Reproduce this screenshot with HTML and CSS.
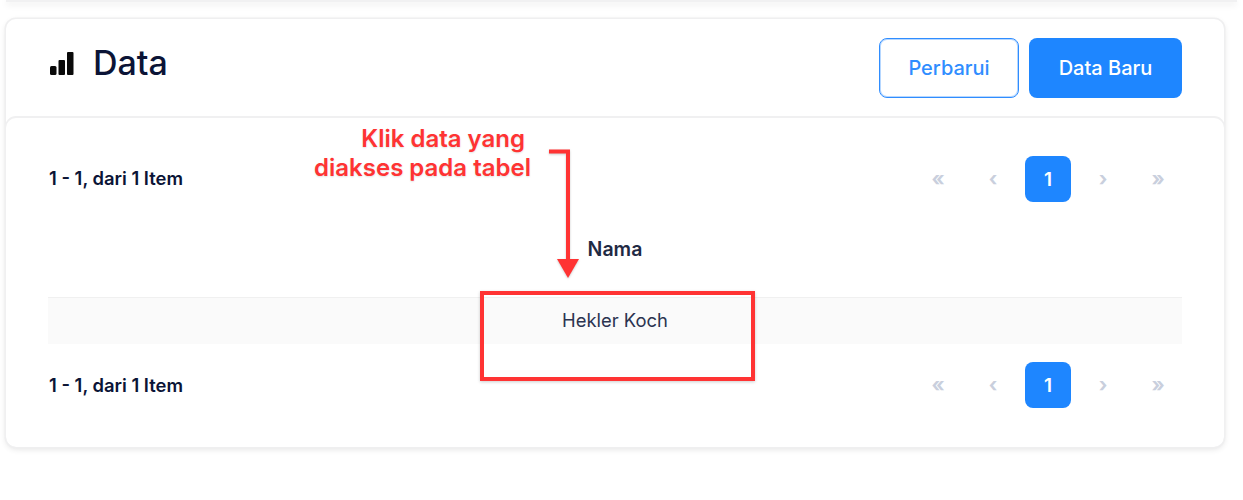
FILE: index.html
```html
<!DOCTYPE html>
<html lang="en">
<head>
    <meta charset="UTF-8">
    <meta name="viewport" content="width=device-width, initial-scale=1.0">
    <title>Data</title>

    <link rel="stylesheet" href="styles.css">
</head>
<body>
    <div class="top"></div>

    <div class="card">
        <div class="head">
            <h1 class="title">
                <svg class="title-icon" width="24" height="23" viewBox="0 0 24 23">
                    <rect x="0" y="14" width="6.500" height="9" rx="1.500"></rect>
                    <rect x="8.500" y="8" width="6.500" height="15" rx="1"></rect>
                    <rect x="17" y="0" width="6.500" height="23" rx="1"></rect>
                </svg>
                Data
            </h1>
            <div class="actions">
                <button class="btn btn-line">Perbarui</button>
                <button class="btn btn-main">Data Baru</button>
            </div>
        </div>

        <div class="body">
            <div class="bar">
                <span class="count">1 - 1, dari 1 Item</span>
                <div class="pager">
                    <span class="page">«</span>
                    <span class="page">‹</span>
                    <span class="page active">1</span>
                    <span class="page">›</span>
                    <span class="page">»</span>
                </div>
            </div>

            <div class="table">
                <div class="table-head">Nama</div>
                <div class="table-row">Hekler Koch</div>
            </div>

            <div class="bar bar-bottom">
                <span class="count">1 - 1, dari 1 Item</span>
                <div class="pager">
                    <span class="page">«</span>
                    <span class="page">‹</span>
                    <span class="page active">1</span>
                    <span class="page">›</span>
                    <span class="page">»</span>
                </div>
            </div>
        </div>

        <!-- penanda merah di atas tabel -->
        <div class="note"><span class="note-first">Klik data yang</span><br>diakses pada tabel</div>
        <svg class="arrow" width="50" height="140" viewBox="0 0 50 140">
            <path d="M1 3.500H20V112" fill="none" stroke="#ff3333" stroke-width="4"></path>
            <path d="M9 111H31L20 130Z" fill="#ff3333"></path>
        </svg>
        <div class="mark"></div>
    </div>
</body>
</html>
```

FILE: styles.css
```css
*{
    box-sizing: border-box;
}

html,
body{
    min-height: 500px;
}

body{
    margin: 0;
    padding-bottom: 53px;
    background-color: #fff;
    font-family: Inter, "Liberation Sans", sans-serif;
    color: #0b1436;
}

/* sisa kartu di atas */
.top{
    height: 2px;
    margin: 0 6px 17px;
    background-color: #f1f1f2;
    box-shadow: 0 2px 7px rgba(0, 0, 0, .14);
}

.card{
    position: relative;
    width: 1218px;
    height: 428px;
    margin-left: 6px;
    background-color: #fff;
    border-radius: 10px;
    box-shadow: 0 0 0 1.500px #efeff0, 0 2px 6px rgba(0, 0, 0, .12);
}

.head{
    display: flex;
    justify-content: space-between;
    height: 99px;
    padding: 19px 42px 0 44px;
}

.title{
    display: flex;
    align-items: flex-start;
    gap: 19px;
    margin: 0;
    font-size: 34px;
    font-weight: 500;
    line-height: 50px;
}

.title-icon{
    margin-top: 14px;
    fill: #0a0a0a;
}

.actions{
    display: flex;
    gap: 10px;
}

.btn{
    height: 60px;
    border-radius: 8px;
    font-family: inherit;
    font-size: 20px;
    font-weight: 500;
}

.btn-line{
    width: 140px;
    border: 1px solid #2f8dff;
    background-color: #fff;
    color: #2f8dff;
    box-shadow: inset 0 0 0 1px rgba(47, 141, 255, .35);
}

.btn-main{
    width: 153px;
    border: 0;
    background-color: #1e86ff;
    color: #fff;
}

/* badan kartu punya sudut sendiri */
.body{
    height: 329px;
    padding: 0 42px;
    border-radius: 10px;
    box-shadow: 0 -1px 0 1px #f0f0f1;
    overflow: hidden;
}

.bar{
    display: flex;
    justify-content: space-between;
    align-items: center;
    height: 46px;
    margin-top: 38px;
}

.bar-bottom{
    margin-top: 18px;
}

.count{
    position: relative;
    top: -1px;
    margin-left: 1px;
    font-size: 18.400px;
    font-weight: 600;
}

.bar-bottom .count{
    top: 0;
}

.pager{
    display: flex;
    gap: 9px;
    margin-right: 1px;
}

.page{
    display: flex;
    justify-content: center;
    align-items: center;
    width: 46px;
    height: 46px;
    border-radius: 8px;
    color: #c9cfdd;
    font-size: 20px;
    font-weight: 700;
}

.page.active{
    background-color: #1e86ff;
    color: #fff;
    font-size: 19px;
    font-weight: 600;
}

.table{
    text-align: center;
}

.table-head{
    height: 96px;
    padding-top: 35px;
    border-bottom: 1px solid #f0f0f0;
    font-size: 19.500px;
    font-weight: 600;
    line-height: 24px;
    color: #1f2a44;
}

.table-row{
    height: 46px;
    background-color: #fafafa;
    font-size: 18.400px;
    line-height: 45px;
    color: #2b3350;
}

/* penanda */
.note{
    position: absolute;
    top: 105px;
    left: 280px;
    width: 245px;
    font-size: 24px;
    font-weight: 600;
    line-height: 29px;
    text-align: right;
    color: #ff3333;
    text-shadow: 0 1px 2px rgba(0, 0, 0, .12);
}

.note-first{
    margin-right: 6px;
}

.arrow{
    position: absolute;
    top: 129px;
    left: 542px;
    filter: drop-shadow(0 1px 1px rgba(0, 0, 0, .2));
}

.mark{
    position: absolute;
    top: 272px;
    left: 474px;
    width: 275px;
    height: 90px;
    border: 4px solid #ff3333;
    box-shadow: 0 1px 3px rgba(0, 0, 0, .2);
}
```
